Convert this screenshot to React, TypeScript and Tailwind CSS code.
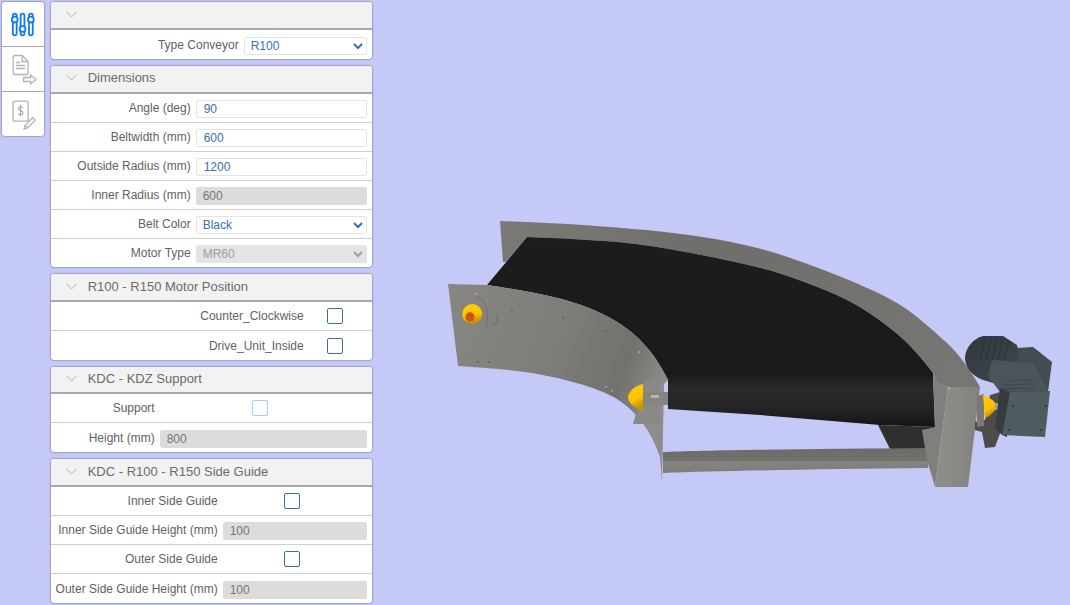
import React from 'react';

const fontBase = "font-['Liberation_Sans',Arial,sans-serif]";

type Row =
  | { label: string; kind: 'input'; value: string }
  | { label: string; kind: 'readonly'; value: string }
  | { label: string; kind: 'select'; value: string }
  | { label: string; kind: 'disabledSelect'; value: string }
  | { label: string; kind: 'check'; light?: boolean };

type Group = { title: string; labelClass: string; headerClass: string; sectionClass?: string; rows: Row[] };

const groups: Group[] = [
  {
    title: '',
    labelClass: 'w-[188px]',
    headerClass: 'h-[28.6px]',
    rows: [{ label: 'Type Conveyor', kind: 'select', value: 'R100' }],
  },
  {
    title: 'Dimensions',
    labelClass: 'w-[140px]',
    headerClass: 'h-[28.1px] pb-[2px]',
    sectionClass: 'h-[201.6px]',
    rows: [
      { label: 'Angle (deg)', kind: 'input', value: '90' },
      { label: 'Beltwidth (mm)', kind: 'input', value: '600' },
      { label: 'Outside Radius (mm)', kind: 'input', value: '1200' },
      { label: 'Inner Radius (mm)', kind: 'readonly', value: '600' },
      { label: 'Belt Color', kind: 'select', value: 'Black' },
      { label: 'Motor Type', kind: 'disabledSelect', value: 'MR60' },
    ],
  },
  {
    title: 'R100 - R150 Motor Position',
    labelClass: 'w-[253px]',
    headerClass: 'h-[28.6px]',
    rows: [
      { label: 'Counter_Clockwise', kind: 'check' },
      { label: 'Drive_Unit_Inside', kind: 'check' },
    ],
  },
  {
    title: 'KDC - KDZ Support',
    labelClass: 'w-[104px]',
    headerClass: 'h-[27.6px] pb-[1px]',
    rows: [
      { label: 'Support', kind: 'check', light: true },
      { label: 'Height (mm)', kind: 'readonly', value: '800' },
    ],
  },
  {
    title: 'KDC - R100 - R150 Side Guide',
    labelClass: 'w-[167px]',
    headerClass: 'h-[28.6px]',
    rows: [
      { label: 'Inner Side Guide', kind: 'check' },
      { label: 'Inner Side Guide Height (mm)', kind: 'readonly', value: '100' },
      { label: 'Outer Side Guide', kind: 'check' },
      { label: 'Outer Side Guide Height (mm)', kind: 'readonly', value: '100' },
    ],
  },
];

const Control: React.FC<{ row: Row }> = ({ row }) => {
  const box = 'h-[18px] w-full rounded-[2px] text-[12px] outline-none';
  if (row.kind === 'input') {
    return <input readOnly defaultValue={row.value} className={`${box} border border-[#e3e3e3] bg-white pl-[7px] text-[#3a6fb0]`} />;
  }
  if (row.kind === 'readonly') {
    return <input disabled defaultValue={row.value} className={`${box} border border-[#dcdcdc] bg-[#dcdcdc] pl-[6px] text-[#777777]`} />;
  }
  if (row.kind === 'select') {
    return (
      <select defaultValue={row.value} className={`${box} border border-[#e3e3e3] bg-white pl-[2px] text-[#3a6fb0]`}>
        <option>{row.value}</option>
      </select>
    );
  }
  if (row.kind === 'disabledSelect') {
    return (
      <select disabled defaultValue={row.value} className={`${box} border border-[#e4e4e4] bg-[#e4e4e4] pl-[2px] text-[#a0a0a0]`}>
        <option>{row.value}</option>
      </select>
    );
  }
  return (
    <div className="flex justify-center pr-[6px]">
      <span className={`block size-[16px] rounded-[2px] border bg-white ${row.light ? 'border-[#a9c8ea]' : 'border-[#3a6fa8]'}`} />
    </div>
  );
};

const Panel: React.FC<{ group: Group }> = ({ group }) => (
  <section className={`w-[321px] overflow-hidden rounded-[3px] bg-white shadow-[0_0_2px_rgba(0,0,0,0.65)] ${group.sectionClass ?? ''}`}>
    <header className={`flex ${group.headerClass} items-center border-b-2 border-[#a9a9a9] bg-[#f2f2f2]`}>
      <svg viewBox="0 0 11 7" className="ml-[15px] h-[7px] w-[11px]" fill="none" stroke="#a8a8a8" strokeWidth="0.9">
        <path d="M0.5 0.800L5.500 6L10.500 0.800" />
      </svg>
      <span className="ml-[11px] text-[13px] text-[#6b6b6b]">{group.title}</span>
    </header>
    {group.rows.map((row, i) => (
      <div
        key={row.label}
        className={`flex h-[29px] items-center pr-[5px] ${i < group.rows.length - 1 ? 'border-b border-[#cfcfcf]' : ''}`}
      >
        <label className={`${group.labelClass} shrink-0 whitespace-nowrap text-right text-[12px] text-[#626262]`}>
          {row.label}
        </label>
        <div className="ml-[5px] min-w-0 flex-1">
          <Control row={row} />
        </div>
      </div>
    ))}
  </section>
);

const ToolIcons = () => (
  <div className="flex w-[42.300px] flex-col overflow-hidden rounded-[3px] bg-white shadow-[0_0_2px_rgba(0,0,0,0.65)]">
    <button className="block h-[45px] border-b border-[#a8a8a8]">
      {/* drawn in page coordinates */}
      <svg viewBox="2 2 42 44" className="h-full w-full" fill="none" stroke="#0f7bf0" strokeWidth="1.8">
        <rect x="12.700" y="13.600" width="3.800" height="21.800" rx="1.900" />
        <rect x="20.500" y="13.600" width="3.800" height="21.800" rx="1.900" />
        <rect x="28.800" y="13.600" width="3.800" height="21.800" rx="1.900" />
        <circle cx="14.600" cy="19.600" r="2.900" fill="white" />
        <circle cx="22.400" cy="29" r="2.900" fill="white" />
        <circle cx="30.700" cy="19.600" r="2.900" fill="white" />
      </svg>
    </button>
    <button className="block h-[45px] border-b border-[#a8a8a8]">
      <svg viewBox="2 47 42 44" className="h-full w-full" fill="none" stroke="#b4b4b4" strokeWidth="1.300">
        <path d="M15 55.500h7l6 6v11a2 2 0 0 1-2 2h-11a2 2 0 0 1-2-2v-15a2 2 0 0 1 2-2z" />
        <path d="M22 55.500v6h6M16 62.500h4M16 65.500h9M16 68.500h9" />
        <path d="M23.500 77.500h7v-2.500l5.500 4.500-5.500 4.500v-2.500h-7z" fill="white" />
      </svg>
    </button>
    <button className="block h-[44.300px]">
      <svg viewBox="2 92 42 44" className="h-full w-full" fill="none" stroke="#b4b4b4" strokeWidth="1.300">
        <rect x="13" y="101" width="15" height="20" rx="2" />
        <path d="M23 107.500c-1-1.300-4.700-1.300-4.700 1 0 2.500 4.700 1.500 4.700 4 0 2.300-3.700 2.300-5 1M20.500 104.500v11.500" stroke="#a0a0a0" strokeWidth="1" />
        <path d="M24 129l1-4 7.500-7.500 2.500 2.500-7.500 7.500z" fill="white" />
        <path d="M25 125l2.500 2.500" />
      </svg>
    </button>
  </div>
);

// turns a list of points into one smooth curve through their midpoints
const smooth = (pts: number[][]) => {
  let d = '';
  for (let i = 1; i < pts.length - 1; i++) {
    const last = i === pts.length - 2;
    const mx = last ? pts[i + 1][0] : (pts[i][0] + pts[i + 1][0]) / 2;
    const my = last ? pts[i + 1][1] : (pts[i][1] + pts[i + 1][1]) / 2;
    d += `Q${pts[i][0]} ${pts[i][1]} ${mx} ${my}`;
  }
  return d;
};

const outerEdge = [[500, 221], [540, 222], [640, 229], [707, 237], [760, 248], [800, 261], [850, 280], [900, 303], [933, 330], [963, 358], [980, 387]];
const rimInner = [[933, 373], [917, 352], [890, 327], [850, 300], [800, 280], [760, 267], [673, 249], [607, 240], [527, 237]];
const wallTop = [[487, 285], [540, 293], [590, 307], [627, 327], [650, 350], [663, 370], [668, 380]];
const wallBottom = [[660, 457], [653, 437], [633, 410], [607, 392], [557, 377], [507, 369], [458, 366]];

const rimPath = `M500 221${smooth(outerEdge)}L948 387L937 383L933 373${smooth(rimInner)}L506 262L503 262Z`;
const beltPath = `M527 237${smooth([...rimInner].reverse())}L935 427L880 425L760 415L668 409L668 380${smooth([...wallTop].reverse())}Z`;
const wallPath = `M448 284L487 285${smooth(wallTop)}L664 384L662 483L660 457${smooth(wallBottom)}Z`;

const Conveyor = () => (
  <svg viewBox="380 0 690 605" className="h-[605px] w-[690px]">
    <defs>
      <linearGradient id="wall" gradientUnits="userSpaceOnUse" x1="448" y1="300" x2="665" y2="380">
        <stop offset="0" stopColor="#878682" />
        <stop offset="0.5" stopColor="#7e7d7a" />
        <stop offset="0.82" stopColor="#72716e" />
        <stop offset="1" stopColor="#8e8d89" />
      </linearGradient>
      <linearGradient id="rim" gradientUnits="userSpaceOnUse" x1="500" y1="230" x2="980" y2="380">
        <stop offset="0" stopColor="#7b7a77" />
        <stop offset="0.4" stopColor="#6f6e6b" />
        <stop offset="1" stopColor="#777672" />
      </linearGradient>
      <linearGradient id="belt" gradientUnits="userSpaceOnUse" x1="0" y1="237" x2="0" y2="427">
        <stop offset="0" stopColor="#1d1d1d" />
        <stop offset="0.72" stopColor="#1a1a1a" />
        <stop offset="0.8" stopColor="#2a2a2a" />
        <stop offset="0.92" stopColor="#222222" />
        <stop offset="1" stopColor="#141414" />
      </linearGradient>
      <linearGradient id="bar" x1="0" y1="0" x2="0" y2="1">
        <stop offset="0" stopColor="#6c6b68" />
        <stop offset="0.5" stopColor="#73726e" />
        <stop offset="0.55" stopColor="#858480" />
        <stop offset="1" stopColor="#7d7c78" />
      </linearGradient>
      <linearGradient id="block" x1="0" y1="0" x2="1" y2="0">
        <stop offset="0" stopColor="#908f8b" />
        <stop offset="1" stopColor="#82817d" />
      </linearGradient>
      <linearGradient id="yellow" x1="0" y1="0" x2="0.3" y2="1">
        <stop offset="0" stopColor="#ffd000" />
        <stop offset="0.65" stopColor="#fbc200" />
        <stop offset="1" stopColor="#c79400" />
      </linearGradient>
      <linearGradient id="motor" x1="0" y1="0" x2="1" y2="1">
        <stop offset="0" stopColor="#30373c" />
        <stop offset="1" stopColor="#414a4f" />
      </linearGradient>
    </defs>

    {/* rim and back plate */}
    <path d={rimPath} fill="url(#rim)" />

    {/* belt */}
    <path d={beltPath} fill="url(#belt)" />

    {/* shadow under the belt and cross bar */}
    <path d="M878 425L936 427V449L890 449Z" fill="#2f2f2e" />
    <path d="M663 452C700 450 820 449 928 448V468C820 469 720 471 663 473Z" fill="url(#bar)" />

    {/* inner wall */}
    <path d={wallPath} fill="url(#wall)" />
    <g fill="#4b4b4a">
      <circle cx="512" cy="310" r="0.800" />
      <circle cx="563" cy="318" r="0.800" />
      <circle cx="606" cy="331" r="0.800" />
      <circle cx="478" cy="362" r="0.800" />
      <circle cx="489" cy="362" r="0.800" />
    </g>
    <g fill="#c6c6c2">
      <circle cx="639" cy="352" r="0.800" />
      <circle cx="606" cy="387" r="0.800" />
      <circle cx="612" cy="391" r="0.800" />
      <circle cx="476" cy="294" r="0.800" />
    </g>

    {/* left bearing */}
    <path d="M476 297C486 298 489 312 487 326" fill="none" stroke="#767572" strokeWidth="1.200" />
    <path d="M496 314C499 318 497 324 492 326" fill="none" stroke="#747370" strokeWidth="1.200" />
    <circle cx="472.300" cy="314" r="10" fill="url(#yellow)" />
    <circle cx="470" cy="317" r="4.700" fill="#c8551a" />

    {/* near roller */}
    <path d="M633 424L637 410L643 382L658 380L660 424Z" fill="#8a8986" />
    <rect x="643" y="392" width="25" height="13" fill="#85847f" />
    <rect x="651" y="395" width="8" height="3" fill="#b8b7b2" />
    <path d="M643 384C634 386 628 392 628 398C629 404 636 409 643 411Z" fill="url(#yellow)" />

    {/* corner block */}
    <path d="M933 373L937 383L948 387L935 487L927 460L922 430L935 427Z" fill="#807f7b" />
    <path d="M948 387H980L968 487H935Z" fill="url(#block)" />
    <circle cx="949" cy="388" r="0.800" fill="#d0d0cc" />

    {/* gear motor */}
    <path d="M990 395L1007 390L1005 420L995 447L985 448L982 432L975 430L975 422L985 420Z" fill="#4e4c49" />
    <path d="M977 396L984 394V426L977 427Z" fill="#7a7975" />
    <rect x="994" y="403" width="6" height="7" fill="#a09f9a" />
    <path d="M983 395C988 397 994 400 995 403V410C992 414 988 417 985 418Z" fill="url(#yellow)" />
    <path d="M1017 348L1033 347L1052 362L1048 392H1000L992 360Z" fill="#434c51" />
    <path d="M983 336H1003L1017 345L1020 362L1000 385L983 380C970 375 965 366 965 357C966 347 973 339 983 336Z" fill="url(#motor)" />
    <path d="M985 339L980 360M991 338L986 361M997 338L992 361M1003 339L998 360M1009 342L1004 360" stroke="#293035" strokeWidth="0.800" />
    <path d="M992 360L1033 363L1048 390L1000 392L988 376Z" fill="#4a5459" />
    <path d="M1005 381L1032 380M1004 385L1034 384M1003 389L1036 388" stroke="#3a4348" strokeWidth="0.800" />
    <path d="M1000 388L1010 392L1007 437L1002 435L995 428Z" fill="#353c40" />
    <path d="M1010 392L1050 391L1045 437L1002 435Z" fill="#505b5f" />
    <g fill="#2b3034">
      <circle cx="1013" cy="406" r="1" />
      <circle cx="1046" cy="406" r="1" />
      <circle cx="1041" cy="430" r="1" />
      <circle cx="1009" cy="430" r="1" />
    </g>
  </svg>
);

const App: React.FC = () => (
  <div className={`${fontBase} flex h-[605px] w-full overflow-hidden bg-[#c4c9f8]`}>
    <div className="ml-[1.700px] mt-[1.700px] shrink-0">
      <ToolIcons />
    </div>
    <div className="ml-[6.700px] flex shrink-0 flex-col gap-[6.400px] pt-[1.700px]">
      {groups.map((group) => (
        <Panel key={group.title || 'type'} group={group} />
      ))}
    </div>
    <div className="ml-auto shrink-0">
      <Conveyor />
    </div>
  </div>
);

export default App;
